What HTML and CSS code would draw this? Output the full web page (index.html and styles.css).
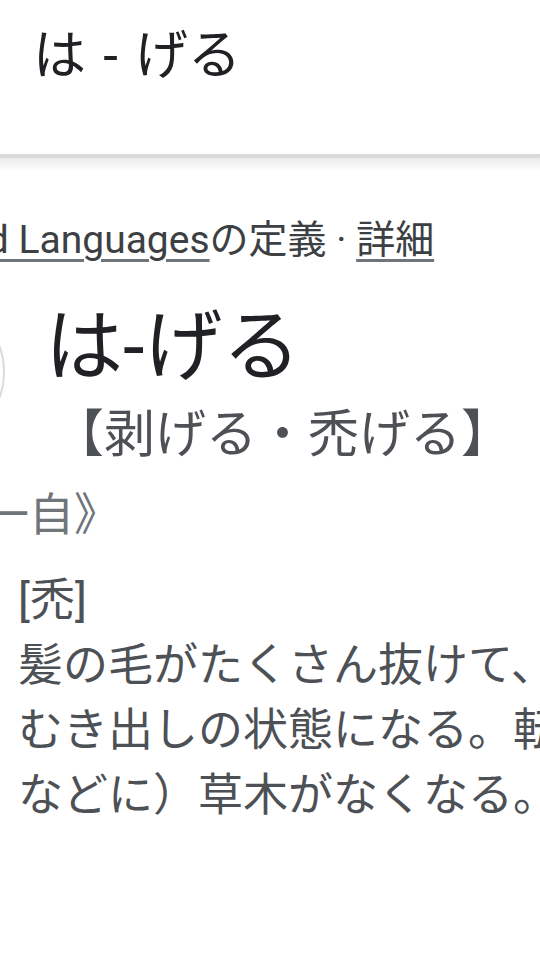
FILE: index.html
```html
<!DOCTYPE html>
<html lang="ja">
<head>
<meta charset="utf-8">
<title>は - げる</title>
<link rel="stylesheet" href="styles.css">
</head>
<body>
<div class="page">
  <header class="topbar">
    <h1 class="topbar-title">は - げる</h1>
  </header>
  <div class="shadow"></div>
  <main class="card">
    <p class="source"><a class="link" href="#">Oxford Languages</a>の定義 · <a class="link" href="#">詳細</a></p>
    <div class="headword-row">
      <span class="audio-btn"></span>
      <span class="headword">は-げる</span>
    </div>
    <p class="kanji">【剥げる・禿げる】</p>
    <p class="pos">《動ガ下一自》</p>
    <div class="def">
      <p class="def-label">[禿]</p>
      <p class="def-line">髪の毛がたくさん抜けて、地肌が</p>
      <p class="def-line">むき出しの状態になる。転じて、（山</p>
      <p class="def-line">などに）草木がなくなる。</p>
    </div>
  </main>
</div>
</body>
</html>
```

FILE: styles.css
```css
html, body {
  margin: 0;
  padding: 0;
  background: #ffffff;
}

body {
  font-family: Roboto, "Noto Sans CJK JP", sans-serif;
}

.page {
  width: 540px;
  height: 960px;
  overflow: hidden;
  background: #ffffff;
}

.topbar {
  height: 154px;
  border-bottom: 4px solid #d9dadb;
  box-sizing: content-box;
  display: flex;
  align-items: flex-start;
}

.topbar-title {
  margin: 18px 0 0 33px;
  font-weight: 400;
  font-size: 53px;
  line-height: 76px;
  word-spacing: 4px;
  color: #202124;
  white-space: nowrap;
}

.shadow {
  height: 14px;
  background: linear-gradient(#ececec, #ffffff);
}

.card {
  white-space: nowrap;
}

.card p {
  margin: 0;
}

.source {
  margin-top: 42px !important;
  margin-left: -108px !important;
  font-size: 39px;
  line-height: 52px;
  color: #3c4043;
}

.link {
  color: #3c4043;
  text-decoration: underline;
  text-decoration-color: #70757a;
  text-decoration-thickness: 3px;
  text-underline-offset: 6px;
}

.headword-row {
  display: flex;
  align-items: center;
  margin-top: 32px;
  height: 100px;
}

.audio-btn {
  flex: none;
  width: 146px;
  height: 146px;
  margin-left: -141px;
  margin-top: 48px;
  border: 2px solid #dadce0;
  border-radius: 50%;
  box-sizing: border-box;
}

.headword {
  margin-left: 40px;
  font-size: 78px;
  line-height: 100px;
  color: #202124;
}

.kanji {
  margin-left: 53px !important;
  margin-top: 2px !important;
  font-size: 51px;
  line-height: 70px;
  color: #4d5156;
}

.pos {
  margin-left: -196px !important;
  margin-top: 14px !important;
  font-size: 45px;
  line-height: 64px;
  color: #70757a;
}

.def {
  margin-top: 20px;
  margin-left: 18px;
}

.def-label,
.def-line {
  font-size: 45px;
  line-height: 65px;
  color: #4d5156;
}
```
